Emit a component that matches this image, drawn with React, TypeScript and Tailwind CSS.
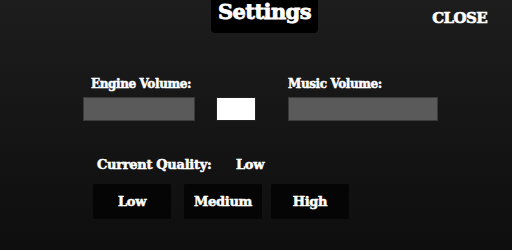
import React from "react";

const font = { fontFamily: '"DejaVu Serif", "Liberation Serif", serif' };

const btn =
  "w-[78px] h-[35px] bg-[#050505] rounded-[2px] flex items-center justify-center text-[13px] tracking-[-0.3px] [-webkit-text-stroke:0.5px_white]";

export default function App() {
  return (
    <div
      className="w-[512px] h-[250px] overflow-hidden bg-gradient-to-b from-[#1d1d1d] to-[#0e0e0e] text-white font-bold flex flex-col"
      style={font}
    >
      <div className="flex h-[33px]">
        <div className="w-[211px]" />
        <div className="w-[107px] h-[33px] bg-black rounded-b-[4px] flex justify-center">
          <span className="text-[21px] leading-[24px] tracking-[-0.6px] [-webkit-text-stroke:0.8px_white]">Settings</span>
        </div>
        <div className="flex-1 flex justify-end pr-[25px] pt-[10px]">
          <span className="text-[15px] leading-[16px] tracking-[-0.6px] [-webkit-text-stroke:0.6px_white]">CLOSE</span>
        </div>
      </div>

      <div className="flex mt-[44px] pl-[83px] items-end">
        <div className="flex flex-col w-[112px]">
          <span className="text-[12px] leading-[14px] pl-[8px] tracking-[-0.4px] [-webkit-text-stroke:0.5px_white]">Engine Volume:</span>
          <div className="mt-[6px] h-[24px] bg-[#5a5a5a] border border-[#3a3a3a]" />
        </div>
        <div className="ml-[21px] w-[40px] h-[24px] bg-white border border-[#222]" />
        <div className="ml-[32px] flex flex-col w-[150px]">
          <span className="text-[12px] leading-[14px] tracking-[-0.4px] [-webkit-text-stroke:0.5px_white]">Music Volume:</span>
          <div className="mt-[6px] h-[24px] bg-[#5a5a5a] border border-[#3a3a3a]" />
        </div>
      </div>

      <div className="flex mt-[36px] pl-[97px] text-[13px] leading-[16px] tracking-[-0.3px] [-webkit-text-stroke:0.5px_white]">
        <span className="w-[139px]">Current Quality:</span>
        <span>Low</span>
      </div>

      <div className="flex mt-[11px] pl-[93px]">
        <div className={btn}>Low</div>
        <div className={`ml-[13px] ${btn}`}>Medium</div>
        <div className={`ml-[9px] ${btn}`}>High</div>
      </div>
    </div>
  );
}
